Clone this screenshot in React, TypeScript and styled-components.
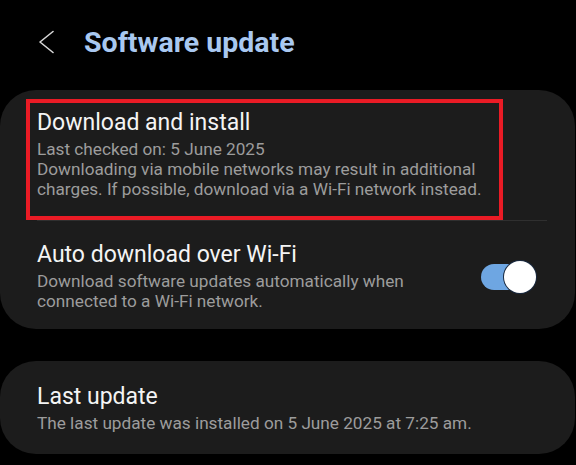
import styled, { createGlobalStyle } from 'styled-components';

const GlobalStyle = createGlobalStyle`
  html, body {
    margin: 0;
    padding: 0;
    background: #000;
  }
  body {
    font-family: 'Roboto', 'Noto Sans', sans-serif;
    -webkit-font-smoothing: antialiased;
  }
`;

const Screen = styled.div`
  width: 576px;
  height: 465px;
  overflow: hidden;
  background: #000;
`;

const Header = styled.div`
  display: flex;
  align-items: center;
  gap: 20px;
  height: 90px;
  padding-left: 36px;
  box-sizing: border-box;
  padding-bottom: 6px;
`;

const BackButton = styled.div`
  display: flex;
  align-items: center;
  width: 28px;
  height: 28px;
`;

const Title = styled.h1`
  margin: 0;
  font-size: 28.5px;
  font-weight: 700;
  color: #a9c8f0;
`;

const Card = styled.div<{ $top: number }>`
  width: 575px;
  margin-top: ${(p) => p.$top}px;
  background: #1c1c1c;
  border-radius: 36px;
  overflow: hidden;
`;

const Highlight = styled.div`
  margin: 9px 0 0 26px;
  width: 477px;
  box-sizing: border-box;
  border: 4px solid #ea1b25;
  padding: 7px 10px 17px 7px;
`;

const Divider = styled.div`
  height: 1px;
  margin: 0 28px 0 37px;
  background: #2f2f2f;
`;

const Row = styled.div<{ $pt: number; $pb: number }>`
  display: flex;
  align-items: center;
  gap: 40px;
  padding: ${(p) => p.$pt}px 39px ${(p) => p.$pb}px 37px;
`;

const TextBlock = styled.div`
  flex: 1;
  min-width: 0;
`;

const ItemTitle = styled.div`
  font-size: 23px;
  line-height: 26px;
  color: #f4f4f4;
  margin-bottom: 3px;
`;

const ItemText = styled.div`
  font-size: 17.2px;
  line-height: 20px;
  color: #9c9c9c;
`;

const Toggle = styled.div`
  position: relative;
  flex: none;
  width: 55px;
  height: 32px;
`;

const Track = styled.div<{ $on: boolean }>`
  position: absolute;
  left: 0;
  top: 3px;
  width: 53px;
  height: 26px;
  border-radius: 13px;
  background: ${(p) => (p.$on ? '#6ea6e2' : '#555')};
`;

const Thumb = styled.div<{ $on: boolean }>`
  position: absolute;
  top: 0;
  ${(p) => (p.$on ? 'right: 0;' : 'left: 0;')}
  width: 32px;
  height: 32px;
  border-radius: 50%;
  background: #fff;
  box-shadow: 0 0 0 1px #1a2a40;
`;

function Switch({ on }: { on: boolean }) {
  return (
    <Toggle>
      <Track $on={on} />
      <Thumb $on={on} />
    </Toggle>
  );
}

export default function App() {
  return (
    <>
      <GlobalStyle />
      <Screen>
        <Header>
          <BackButton>
            <svg width="18" height="26" viewBox="0 0 18 26">
              <path
                d="M17 2.5 L4 13 L17 23.5"
                fill="none"
                stroke="#d6d6d6"
                strokeWidth="1.6"
                strokeLinecap="round"
                strokeLinejoin="round"
              />
            </svg>
          </BackButton>
          <Title>Software update</Title>
        </Header>

        <Card $top={0}>
          <Highlight>
            <ItemTitle>Download and install</ItemTitle>
            <ItemText>Last checked on: 5 June 2025</ItemText>
            <ItemText>
              Downloading via mobile networks may result in additional
              charges. If possible, download via a Wi-Fi network instead.
            </ItemText>
          </Highlight>
          <Divider />
          <Row $pt={21} $pb={18}>
            <TextBlock>
              <ItemTitle>Auto download over Wi-Fi</ItemTitle>
              <ItemText>
                Download software updates automatically when connected to a
                Wi-Fi network.
              </ItemText>
            </TextBlock>
            <Switch on />
          </Row>
        </Card>

        <Card $top={32}>
          <Row $pt={23} $pb={21}>
            <TextBlock>
              <ItemTitle>Last update</ItemTitle>
              <ItemText>
                The last update was installed on 5 June 2025 at 7:25 am.
              </ItemText>
            </TextBlock>
          </Row>
        </Card>
      </Screen>
    </>
  );
}
